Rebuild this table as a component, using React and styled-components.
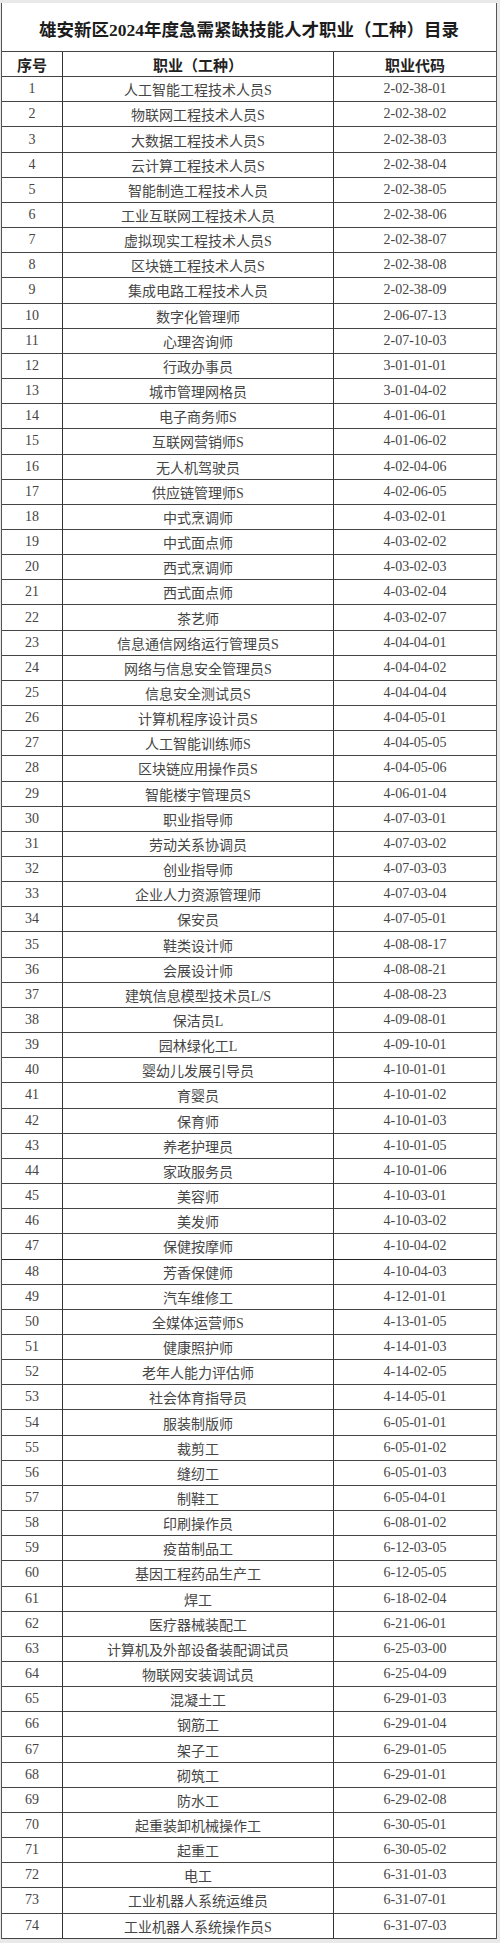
import React from "react";
import styled, {createGlobalStyle} from "styled-components";

const GlobalStyle = createGlobalStyle`
  html, body {
    margin: 0;
    padding: 0;
    background: #e9e9e9;
  }
`;

const Sheet = styled.div`
  margin: 3px 3px 0 1px;
  background: #fff;
  border-left: 1px solid #555;
  border-right: 1px solid #555;
  font-family: "Liberation Serif", "Noto Sans CJK SC", serif;
  color: #444;
`;

const Title = styled.div`
  height: 49px;
  display: flex;
  align-items: center;
  justify-content: center;
  font-size: 17.5px;
  font-weight: bold;
  color: #1c1c1c;
  border-bottom: 1px solid #444;
  padding-top: 2px;
  box-sizing: border-box;
`;

const Grid = styled.div`
  display: grid;
  grid-template-columns: 61px 271px 1fr;
  grid-auto-rows: 25.17px;
`;

const Cell = styled.div`
  display: flex;
  align-items: center;
  justify-content: center;
  border-bottom: 1px solid ${(props) => (props.$split ? "#222" : "#444")};
  border-right: ${(props) => (props.$last ? "none" : "1px solid #333")};
  box-sizing: border-box;
  font-size: ${(props) => (props.$head ? "15px" : "14px")};
  font-weight: ${(props) => (props.$head ? "bold" : "normal")};
  color: ${(props) => (props.$head ? "#222" : "#454545")};
  white-space: nowrap;
`;

const rows = [
    ["人工智能工程技术人员S", "2-02-38-01"],
    ["物联网工程技术人员S", "2-02-38-02"],
    ["大数据工程技术人员S", "2-02-38-03"],
    ["云计算工程技术人员S", "2-02-38-04"],
    ["智能制造工程技术人员", "2-02-38-05"],
    ["工业互联网工程技术人员", "2-02-38-06"],
    ["虚拟现实工程技术人员S", "2-02-38-07"],
    ["区块链工程技术人员S", "2-02-38-08"],
    ["集成电路工程技术人员", "2-02-38-09"],
    ["数字化管理师", "2-06-07-13"],
    ["心理咨询师", "2-07-10-03"],
    ["行政办事员", "3-01-01-01"],
    ["城市管理网格员", "3-01-04-02"],
    ["电子商务师S", "4-01-06-01"],
    ["互联网营销师S", "4-01-06-02"],
    ["无人机驾驶员", "4-02-04-06"],
    ["供应链管理师S", "4-02-06-05"],
    ["中式烹调师", "4-03-02-01"],
    ["中式面点师", "4-03-02-02"],
    ["西式烹调师", "4-03-02-03"],
    ["西式面点师", "4-03-02-04"],
    ["茶艺师", "4-03-02-07"],
    ["信息通信网络运行管理员S", "4-04-04-01"],
    ["网络与信息安全管理员S", "4-04-04-02"],
    ["信息安全测试员S", "4-04-04-04"],
    ["计算机程序设计员S", "4-04-05-01"],
    ["人工智能训练师S", "4-04-05-05"],
    ["区块链应用操作员S", "4-04-05-06"],
    ["智能楼宇管理员S", "4-06-01-04"],
    ["职业指导师", "4-07-03-01"],
    ["劳动关系协调员", "4-07-03-02"],
    ["创业指导师", "4-07-03-03"],
    ["企业人力资源管理师", "4-07-03-04"],
    ["保安员", "4-07-05-01"],
    ["鞋类设计师", "4-08-08-17"],
    ["会展设计师", "4-08-08-21"],
    ["建筑信息模型技术员L/S", "4-08-08-23"],
    ["保洁员L", "4-09-08-01"],
    ["园林绿化工L", "4-09-10-01"],
    ["婴幼儿发展引导员", "4-10-01-01"],
    ["育婴员", "4-10-01-02"],
    ["保育师", "4-10-01-03"],
    ["养老护理员", "4-10-01-05"],
    ["家政服务员", "4-10-01-06"],
    ["美容师", "4-10-03-01"],
    ["美发师", "4-10-03-02"],
    ["保健按摩师", "4-10-04-02"],
    ["芳香保健师", "4-10-04-03"],
    ["汽车维修工", "4-12-01-01"],
    ["全媒体运营师S", "4-13-01-05"],
    ["健康照护师", "4-14-01-03"],
    ["老年人能力评估师", "4-14-02-05"],
    ["社会体育指导员", "4-14-05-01"],
    ["服装制版师", "6-05-01-01"],
    ["裁剪工", "6-05-01-02"],
    ["缝纫工", "6-05-01-03"],
    ["制鞋工", "6-05-04-01"],
    ["印刷操作员", "6-08-01-02"],
    ["疫苗制品工", "6-12-03-05"],
    ["基因工程药品生产工", "6-12-05-05"],
    ["焊工", "6-18-02-04"],
    ["医疗器械装配工", "6-21-06-01"],
    ["计算机及外部设备装配调试员", "6-25-03-00"],
    ["物联网安装调试员", "6-25-04-09"],
    ["混凝土工", "6-29-01-03"],
    ["钢筋工", "6-29-01-04"],
    ["架子工", "6-29-01-05"],
    ["砌筑工", "6-29-01-01"],
    ["防水工", "6-29-02-08"],
    ["起重装卸机械操作工", "6-30-05-01"],
    ["起重工", "6-30-05-02"],
    ["电工", "6-31-01-03"],
    ["工业机器人系统运维员", "6-31-07-01"],
    ["工业机器人系统操作员S", "6-31-07-03"],
];

export default function App() {
    return (
        <>
            <GlobalStyle/>
            <Sheet>
                <Title>雄安新区2024年度急需紧缺技能人才职业（工种）目录</Title>
                <Grid>
                    <Cell $head>序号</Cell>
                    <Cell $head>职业（工种）</Cell>
                    <Cell $head $last>职业代码</Cell>
                    {rows.map((item, index) => (
                        <React.Fragment key={index}>
                            <Cell $split={index === 46}>{index + 1}</Cell>
                            <Cell $split={index === 46}>{item[0]}</Cell>
                            <Cell $split={index === 46} $last>{item[1]}</Cell>
                        </React.Fragment>
                    ))}
                </Grid>
            </Sheet>
        </>
    );
}
